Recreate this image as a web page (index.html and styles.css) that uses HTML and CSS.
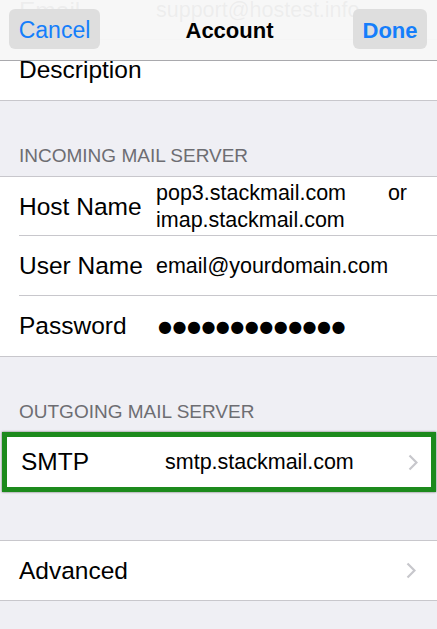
FILE: index.html
```html
<!DOCTYPE html>
<html lang="en">
<head>
<meta charset="utf-8">
<title>Account</title>
<link rel="stylesheet" href="styles.css">
</head>
<body>
<div class="screen">
  <header class="nav">
    <button class="nav-btn cancel">Cancel</button>
    <h1 class="nav-title">Account</h1>
    <button class="nav-btn done">Done</button>
  </header>
  <main class="content">
    <section class="group top-group">
      <div class="row"><span class="label">Email</span><span class="value">support@hostest.info</span></div>
      <div class="row"><span class="label">Description</span></div>
    </section>

    <h2 class="section-header">INCOMING MAIL SERVER</h2>
    <section class="group">
      <div class="row">
        <span class="label">Host Name</span>
        <div class="value multi">
          <div class="line"><span>pop3.stackmail.com</span><span>or</span></div>
          <div class="line"><span>imap.stackmail.com</span></div>
        </div>
      </div>
      <div class="row"><span class="label">User Name</span><span class="value">email@yourdomain.com</span></div>
      <div class="row"><span class="label">Password</span><span class="value dots">●●●●●●●●●●●●●</span></div>
    </section>

    <h2 class="section-header">OUTGOING MAIL SERVER</h2>
    <section class="group highlight">
      <div class="row link">
        <span class="label">SMTP</span>
        <span class="value smtp">smtp.stackmail.com</span>
        <svg class="chevron" width="10" height="17" viewBox="0 0 10 17"><polyline points="1.5,1.5 8.5,8.5 1.5,15.5" fill="none" stroke="#c7c7cc" stroke-width="2.2"/></svg>
      </div>
    </section>

    <section class="group advanced">
      <div class="row link">
        <span class="label">Advanced</span>
        <svg class="chevron" width="10" height="17" viewBox="0 0 10 17"><polyline points="1.5,1.5 8.5,8.5 1.5,15.5" fill="none" stroke="#c7c7cc" stroke-width="2.2"/></svg>
      </div>
    </section>
  </main>
</div>
</body>
</html>
```

FILE: styles.css
```css
* { box-sizing: border-box; }
html, body {
  margin: 0;
  padding: 0;
  background: #efeff4;
  font-family: "Liberation Sans", Arial, sans-serif;
  color: #000;
}
.screen {
  position: relative;
  width: 437px;
  height: 629px;
  overflow: hidden;
  background: #efeff4;
}
.nav {
  position: absolute;
  top: 0;
  left: 0;
  right: 0;
  height: 61px;
  background: rgba(247, 247, 247, 0.96);
  border-bottom: 1px solid #a9a9ad;
  display: flex;
  align-items: flex-start;
  justify-content: space-between;
  padding: 9px 10px 0 9px;
  z-index: 2;
}
.nav-btn {
  height: 40px;
  border: none;
  border-radius: 6px;
  background: #dedede;
  color: #157efb;
  font-family: "Liberation Sans", Arial, sans-serif;
  font-size: 23px;
  padding: 3px 0 0;
  margin: 0;
}
.cancel { width: 91px; }
.done { width: 74px; font-weight: bold; font-size: 22px; }
.nav-title {
  margin: 0;
  font-size: 22px;
  font-weight: bold;
  line-height: 40px;
  padding: 2px 0 0 6px;
}
.content {
  margin-top: -20px;
}
.group {
  background: #fff;
  border-top: 1px solid #c8c7cc;
  border-bottom: 1px solid #c8c7cc;
}
.row {
  display: flex;
  align-items: center;
  height: 60px;
  padding-left: 19px;
  position: relative;
}
.row + .row::before {
  content: "";
  position: absolute;
  top: -1px;
  left: 19px;
  right: 0;
  height: 1px;
  background: #c8c7cc;
}
.group .row:first-child { height: 59px; }
.label {
  width: 137px;
  flex: none;
  font-size: 24.5px;
  white-space: nowrap;
}
.value {
  font-size: 21.5px;
  white-space: nowrap;
}
.multi {
  width: 251px;
  line-height: 27px;
}
.multi .line {
  display: flex;
  justify-content: space-between;
}
.dots {
  font-family: "DejaVu Sans", sans-serif;
  font-size: 16px;
  letter-spacing: 0.5px;
  padding-left: 2px;
}
.section-header {
  margin: 0;
  padding: 44px 19px 9px;
  font-size: 19px;
  line-height: 22px;
  font-weight: normal;
  color: #6d6d72;
}
.highlight {
  border: 5px solid #1c8a1c;
  margin: 0 1px 0 2px;
  box-shadow: 0 0 2px rgba(0, 0, 0, 0.6);
}
.highlight .row { height: 50px; padding-left: 14px; }
.highlight .row:first-child { height: 50px; }
.smtp { margin-left: 7px; }
.link .chevron {
  margin-left: auto;
  flex: none;
}
.highlight .chevron { margin-right: 13px; }
.advanced { margin-top: 48px; }
.advanced .chevron { margin-right: 21px; }
```
